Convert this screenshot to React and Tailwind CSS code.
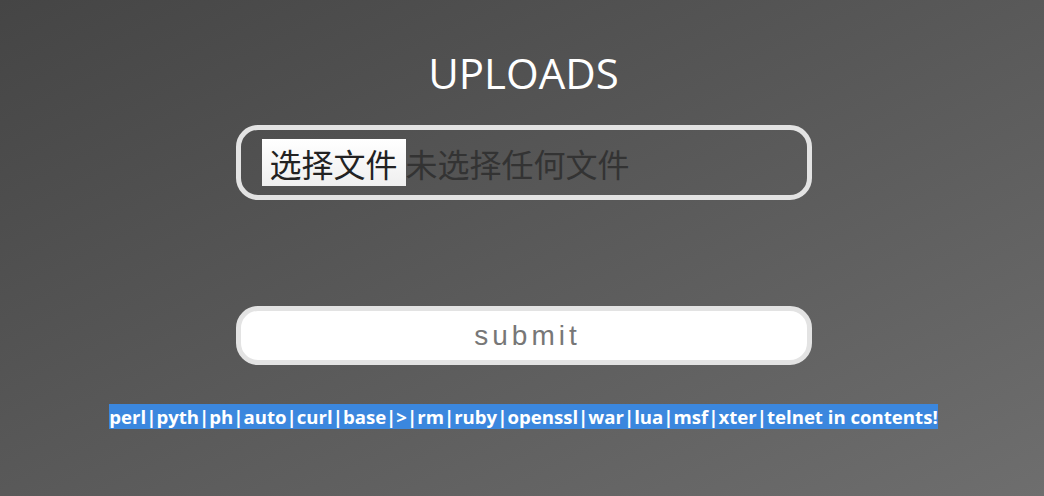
export default function App() {
  return (
    <div className="w-[1044px] h-[496px] overflow-hidden bg-gradient-to-br from-[#454545] to-[#6e6e6e] flex flex-col items-center pl-[3px] font-['Open_Sans',sans-serif]">
      <h1 className="mt-[48px] h-[50px] text-[42px] leading-[50px] text-white">UPLOADS</h1>

      <div className="mt-[27px] w-[576px] h-[75px] border-[5px] border-[#e3e3e3] rounded-[22px] flex items-center pl-[21px] font-['Noto_Sans_CJK_SC',sans-serif]">
        <span className="h-[47px] px-[8px] flex items-center bg-gradient-to-b from-white to-[#efefef] text-[#222] text-[32px] leading-none">选择文件</span>
        <span className="text-[#333] text-[32px] leading-none">未选择任何文件</span>
      </div>

      <button className="mt-[106px] w-[576px] h-[59px] border-[5px] border-[#e3e3e3] rounded-[22px] bg-white flex items-center justify-center pl-[8px] font-['Liberation_Sans',sans-serif] text-[28px] tracking-[4px] text-[#777]">
        submit
      </button>

      <p className="mt-[39px] text-[18.6px] leading-[26px] font-bold text-white">
        <span className="bg-[#3b87de]">perl|pyth|ph|auto|curl|base|&gt;|rm|ruby|openssl|war|lua|msf|xter|telnet in contents!</span>
      </p>
    </div>
  );
}
